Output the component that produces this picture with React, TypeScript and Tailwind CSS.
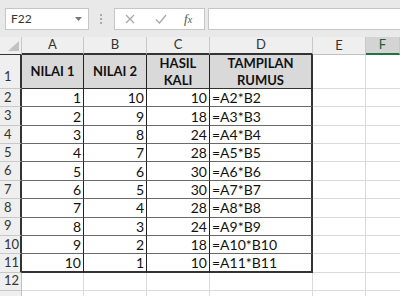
import React from "react";

const COLS = ["A", "B", "C", "D", "E", "F"];
const COL_W = ["22px", "62px", "63px", "63px", "103px", "53px", "1fr"];

const rows: (string | number)[][] = [
  [1, 10, 10, "=A2*B2"],
  [2, 9, 18, "=A3*B3"],
  [3, 8, 24, "=A4*B4"],
  [4, 7, 28, "=A5*B5"],
  [5, 6, 30, "=A6*B6"],
  [6, 5, 30, "=A7*B7"],
  [7, 4, 28, "=A8*B8"],
  [8, 3, 24, "=A9*B9"],
  [9, 2, 18, "=A10*B10"],
  [10, 1, 10, "=A11*B11"],
];

function Toolbar() {
  return (
    <div className="flex h-[37px] items-center bg-[#e9e9e9]">
      <div className="ml-[5px] flex h-[22px] w-[84px] items-center justify-between border border-[#c6c6c6] bg-white pl-[5px] pr-[6px] text-[12px] text-[#333]">
        <span>F22</span>
        <svg width="7" height="4" viewBox="0 0 7 4">
          <path d="M0 0h7L3.5 4z" fill="#777" />
        </svg>
      </div>
      <div className="ml-[11px] flex flex-col gap-[2px]">
        <span className="h-[2px] w-[2px] bg-[#aaa]" />
        <span className="h-[2px] w-[2px] bg-[#aaa]" />
        <span className="h-[2px] w-[2px] bg-[#aaa]" />
      </div>
      <div className="ml-[12px] flex h-[22px] w-[91px] items-center border border-[#c6c6c6] bg-white">
        <svg className="ml-[10px]" width="10" height="10" viewBox="0 0 10 10">
          <path d="M1 1l8 8M9 1l-8 8" stroke="#a6a6a6" strokeWidth="1.2" />
        </svg>
        <svg className="ml-[20px]" width="12" height="10" viewBox="0 0 12 10">
          <path d="M1 5.5l3.5 3.5L11 1" stroke="#a6a6a6" strokeWidth="1.2" fill="none" />
        </svg>
        <span className="ml-[17px] font-['Liberation_Serif',serif] text-[13px] italic text-[#555]">
          f<span className="text-[10px]">x</span>
        </span>
      </div>
      <div className="ml-[3px] h-[22px] flex-1 border border-r-0 border-[#c6c6c6] bg-white" />
    </div>
  );
}

function Cell({
  children,
  className,
}: {
  children?: React.ReactNode;
  className: string;
}) {
  return <div className={`flex min-w-0 items-center overflow-hidden whitespace-nowrap ${className}`}>{children}</div>;
}

export default function App() {
  const dataRows = [...rows.map((r, i) => ({ n: i + 2, vals: r })), { n: 12, vals: null }, { n: 13, vals: null }];

  return (
    <div className="h-[296px] w-[400px] overflow-hidden bg-white font-['Lato','Open_Sans',sans-serif] text-[#111]">
      <Toolbar />
      <div
        className="grid"
        style={{
          gridTemplateColumns: COL_W.join(" "),
          gridTemplateRows: `18px 34px repeat(10, 18.37px) 18px 18px`,
        }}
      >
        {/* column header row */}
        <Cell className="relative border-b border-r border-b-[#333] border-r-[#c8c8c8] bg-[#efefef]">
          <svg className="absolute bottom-[3px] right-[2px]" width="11" height="10" viewBox="0 0 11 10">
            <path d="M11 0v10H0z" fill="#c2c2c2" />
          </svg>
        </Cell>
        {COLS.map((c, i) => {
          const inTable = i < 4;
          const sel = c === "F";
          return (
            <Cell
              key={c}
              className={`justify-center text-[13px] ${
                sel
                  ? "border-b-2 border-r border-b-[#217346] border-r-[#c8c8c8] bg-[#d4d4d4] text-[#1f5f3a]"
                  : inTable
                  ? "border-b-2 border-r border-b-[#333] border-r-[#c8c8c8] bg-[#efefef] text-[#333]"
                  : "border-b border-r border-b-[#c0c0c0] border-r-[#c8c8c8] bg-[#efefef] text-[#333]"
              }`}
            >
              {c}
            </Cell>
          );
        })}

        {/* row 1 */}
        <Cell className="items-end border-b border-r-2 border-b-[#c8c8c8] border-r-[#333] bg-[#efefef] pb-[2px] pl-[4px] text-[13px] text-[#333]">
          1
        </Cell>
        {["NILAI 1", "NILAI 2", "HASIL KALI", "TAMPILAN RUMUS"].map((t, i) => (
          <Cell
            key={t}
            className={`justify-center whitespace-normal bg-[#d9d9d9] text-center text-[13px] font-bold leading-[17px] text-[#111] border-b border-b-[#333] ${
              i === 3 ? "border-r-2 border-r-[#333]" : "border-r border-r-[#222]"
            }`}
          >
            {t === "NILAI 1" || t === "NILAI 2" ? (
              t
            ) : (
              <span>
                {t.split(" ")[0]}
                <br />
                {t.split(" ")[1]}
              </span>
            )}
          </Cell>
        ))}
        <Cell className="border-b border-r border-[#dadada]" />
        <Cell className="border-b border-[#dadada]" />

        {dataRows.map(({ n, vals }) => {
          const inTable = vals !== null;
          const last = n === 11;
          return (
            <React.Fragment key={n}>
              <Cell
                className={`border-b bg-[#efefef] pl-[4px] text-[13px] text-[#333] border-b-[#c8c8c8] ${
                  inTable ? "border-r-2 border-r-[#333]" : "border-r border-r-[#c0c0c0]"
                }`}
              >
                {n < 13 ? n : null}
              </Cell>
              {[0, 1, 2, 3].map((ci) => (
                <Cell
                  key={ci}
                  className={`text-[14px] ${
                    inTable
                      ? `${last ? "border-b-2 border-b-[#333]" : "border-b border-b-[#6a6a6a]"} ${
                          ci === 3 ? "border-r-2 border-r-[#333] pl-[2px]" : "justify-end border-r border-r-[#222] pr-[2px]"
                        }`
                      : "border-b border-r border-[#dadada]"
                  }`}
                >
                  {vals ? vals[ci] : null}
                </Cell>
              ))}
              <Cell className="border-b border-r border-[#dadada]" />
              <Cell className="border-b border-[#dadada]" />
            </React.Fragment>
          );
        })}
      </div>
    </div>
  );
}
